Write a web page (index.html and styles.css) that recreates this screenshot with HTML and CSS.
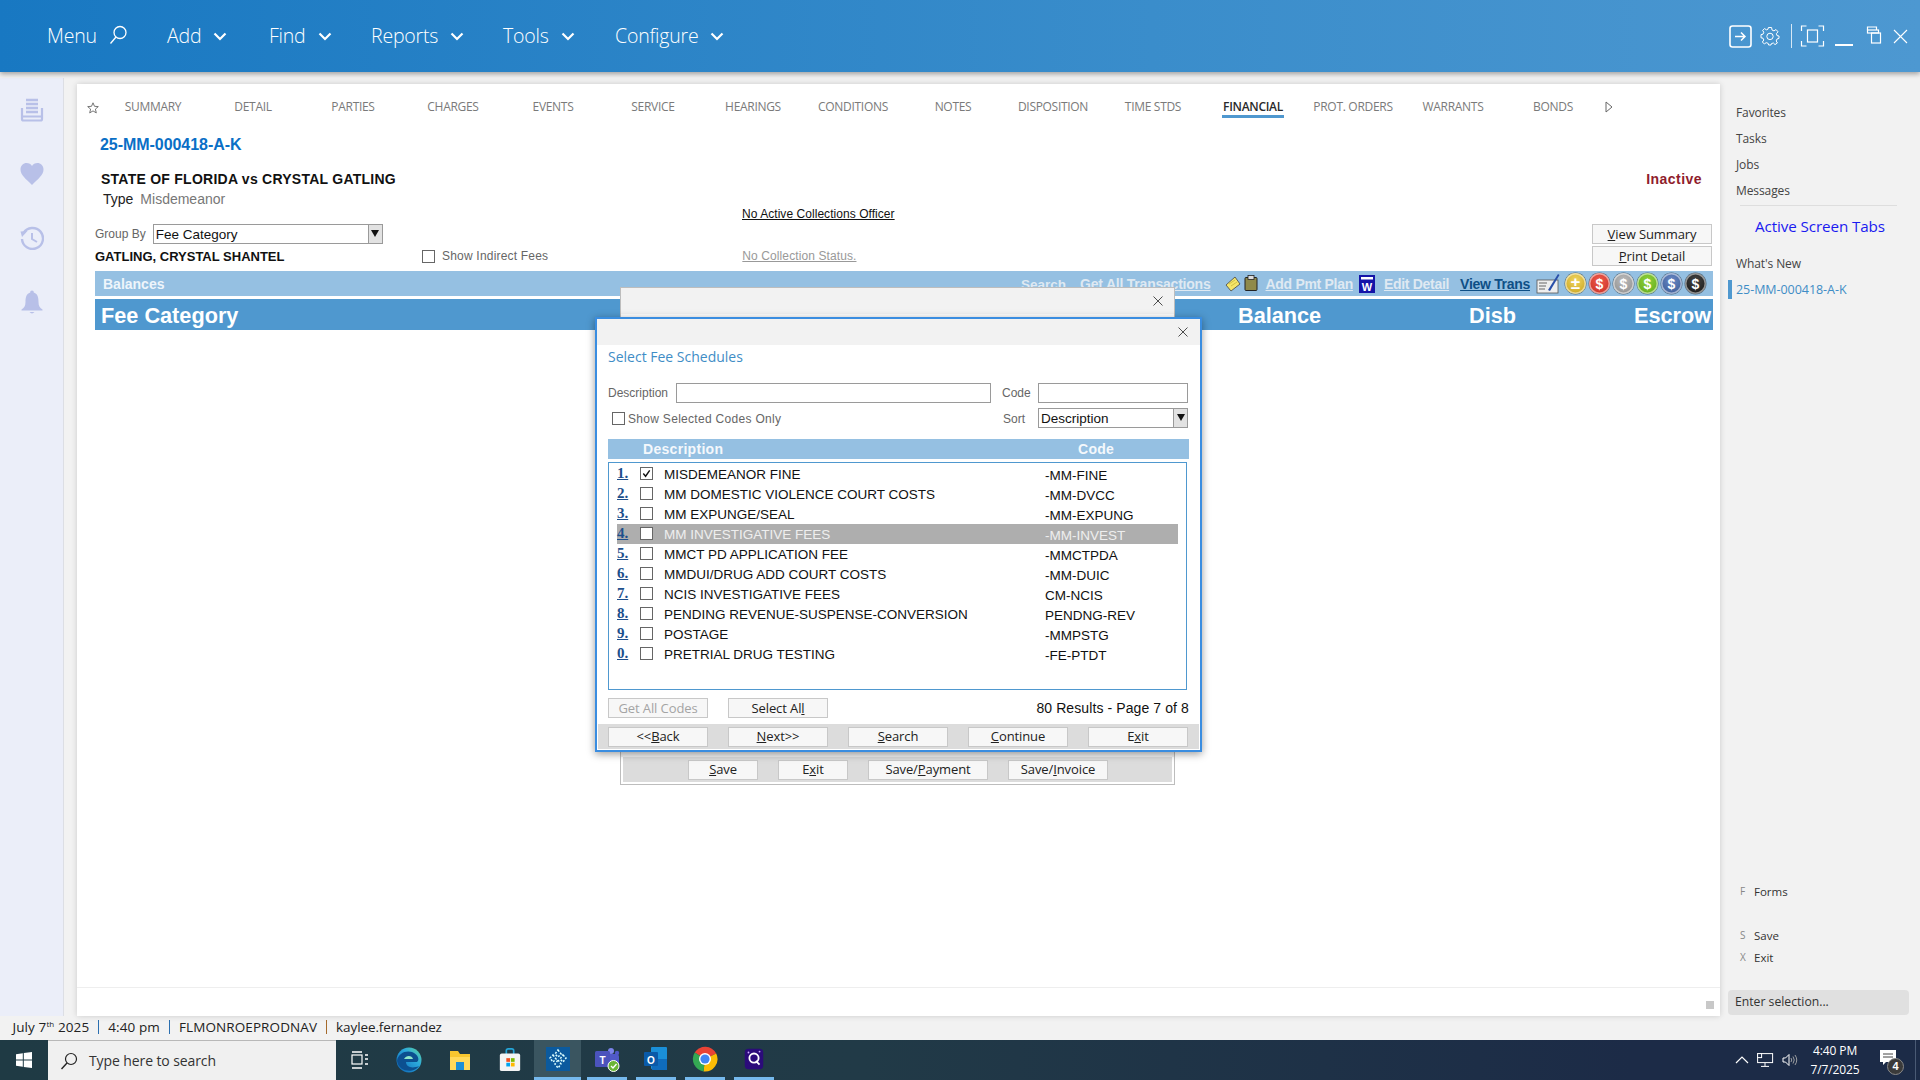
FILE: index.html
```html
<!DOCTYPE html>
<html lang="en">
<head>
<meta charset="utf-8">
<title>Financial</title>
<link rel="stylesheet" href="styles.css">
</head>
<body>
<div class="app">
  <header class="topbar">
    <nav class="nav">
      <div class="nav-item"><span>Menu</span><svg class="nav-search" viewBox="0 0 20 20"><circle cx="12" cy="7.500" r="6" fill="none" stroke="#fff" stroke-width="1.300"/><path d="M8 12 L2.500 18.500" stroke="#fff" stroke-width="1.300" fill="none"/></svg></div>
      <div class="nav-item"><span>Add</span><svg class="chev" viewBox="0 0 14 9"><path d="M1.500 1.500 L7 7 L12.500 1.500" fill="none" stroke="#fff" stroke-width="2.200"/></svg></div>
      <div class="nav-item"><span>Find</span><svg class="chev" viewBox="0 0 14 9"><path d="M1.500 1.500 L7 7 L12.500 1.500" fill="none" stroke="#fff" stroke-width="2.200"/></svg></div>
      <div class="nav-item"><span>Reports</span><svg class="chev" viewBox="0 0 14 9"><path d="M1.500 1.500 L7 7 L12.500 1.500" fill="none" stroke="#fff" stroke-width="2.200"/></svg></div>
      <div class="nav-item"><span>Tools</span><svg class="chev" viewBox="0 0 14 9"><path d="M1.500 1.500 L7 7 L12.500 1.500" fill="none" stroke="#fff" stroke-width="2.200"/></svg></div>
      <div class="nav-item"><span>Configure</span><svg class="chev" viewBox="0 0 14 9"><path d="M1.500 1.500 L7 7 L12.500 1.500" fill="none" stroke="#fff" stroke-width="2.200"/></svg></div>
    </nav>
    <div class="winctl">
      <svg class="ctl-login" viewBox="0 0 23 23"><rect x="1" y="1" width="21" height="21" rx="2.500" fill="none" stroke="#fff" stroke-width="1.600"/><path d="M6 11.500 H16 M12 7.500 L16 11.500 L12 15.500" fill="none" stroke="#fff" stroke-width="1.500"/></svg>
      <svg class="ctl-gear" viewBox="0 0 20 20"><path d="M8.400 1.500 H11.600 L12 4 L14 4.900 L16 3.500 L18 5.800 L16.400 7.700 L17 9.600 L19 10 V12.400 L17 13 L16.200 15 L17.400 17 L15 18.600 L13.400 17 L11.400 17.600 L11 19 H8.600 L8.200 17.400 L6.200 16.600 L4.400 18 L2.400 16 L3.800 14 L3 12.200 L1 11.800 V8.600 L3 8.200 L3.800 6.200 L2.600 4.400 L4.600 2.600 L6.400 3.800 L8 3.200 Z" fill="none" stroke="#fff" stroke-width="1"/><circle cx="10" cy="10.400" r="3.200" fill="none" stroke="#fff" stroke-width="1"/></svg>
      <span class="ctl-sep"></span>
      <svg class="ctl-full" viewBox="0 0 24 22"><path d="M1 6 V1 H6 M18 1 H23 V6 M23 16 V21 H18 M6 21 H1 V16" fill="none" stroke="#fff" stroke-width="1.200"/><rect x="7" y="5" width="10" height="12" fill="none" stroke="#fff" stroke-width="1.200"/></svg>
      <span class="ctl-min"></span>
      <svg class="ctl-restore" viewBox="0 0 16 18"><path d="M1 4 V1 H10 V4" fill="none" stroke="#fff" stroke-width="1.200"/><rect x="1" y="4" width="11" height="3" fill="none" stroke="#fff" stroke-width="1.200"/><rect x="5" y="7" width="9" height="10" fill="none" stroke="#fff" stroke-width="1.200"/></svg>
      <svg class="ctl-close" viewBox="0 0 15 15"><path d="M1 1 L14 14 M14 1 L1 14" stroke="#fff" stroke-width="1.100" fill="none"/></svg>
    </div>
  </header>

  <div class="main">
    <aside class="rail">
      <svg class="rail-icon" viewBox="0 0 24 24"><path d="M6 2 H18 M6 6 H18 M6 10 H18 M6 14 H18" stroke="#b8c0e8" stroke-width="2.400" fill="none"/><path d="M2 10 V21 Q2 22.500 3.500 22.500 H20.500 Q22 22.500 22 21 V10 M2 18.500 H22" stroke="#b8c0e8" stroke-width="2.200" fill="none"/></svg>
      <svg class="rail-icon" viewBox="0 0 24 24"><path d="M12 23 C6 17 0.500 13 0.500 7.500 C0.500 3.500 3.500 1 6.500 1 C9 1 11 2.300 12 4 C13 2.300 15 1 17.500 1 C20.500 1 23.500 3.500 23.500 7.500 C23.500 13 18 17 12 23 Z" fill="#b8c0e8"/></svg>
      <svg class="rail-icon" viewBox="0 0 24 24"><path d="M3.500 7 A10.500 10.500 0 1 1 2 13" fill="none" stroke="#b8c0e8" stroke-width="2.400"/><path d="M0.500 5.500 L7.500 5 L2 11 Z" fill="#b8c0e8"/><path d="M12 7 V13 L17 16" fill="none" stroke="#b8c0e8" stroke-width="2"/></svg>
      <svg class="rail-icon" viewBox="0 0 24 24"><path d="M12 0.500 a1.800 1.800 0 0 1 1.800 2 C18 4 18.500 8 18.500 12 C18.500 16 20 18 22.500 19.500 V20.500 H1.500 V19.500 C4 18 5.500 16 5.500 12 C5.500 8 6 4 10.200 2.500 a1.800 1.800 0 0 1 1.800 -2 Z" fill="#b8c0e8"/><path d="M9.500 22 H14.500 Q12 24.800 9.500 22 Z" fill="#b8c0e8"/></svg>
    </aside>

    <section class="panel">
      <div class="tabs">
        <svg class="tab-star" viewBox="0 0 12 12"><path d="M6 .8 L7.500 4.300 L11.300 4.600 L8.400 7.100 L9.300 10.900 L6 8.900 L2.700 10.900 L3.600 7.100 L.7 4.600 L4.500 4.300 Z" fill="none" stroke="#666" stroke-width=".9"/></svg>
        <div class="tab-list">
          <span class="tab">SUMMARY</span><span class="tab">DETAIL</span><span class="tab">PARTIES</span><span class="tab">CHARGES</span><span class="tab">EVENTS</span><span class="tab">SERVICE</span><span class="tab">HEARINGS</span><span class="tab">CONDITIONS</span><span class="tab">NOTES</span><span class="tab">DISPOSITION</span><span class="tab">TIME STDS</span><span class="tab tab-on"><b>FINANCIAL</b></span><span class="tab">PROT. ORDERS</span><span class="tab">WARRANTS</span><span class="tab">BONDS</span>
          <svg class="tab-more" viewBox="0 0 8 12"><path d="M1 1 L7 6 L1 11 Z" fill="none" stroke="#666" stroke-width="1"/></svg>
        </div>
      </div>
      <div class="case-no">25-MM-000418-A-K</div>
      <div class="party-row">
        <div class="party">STATE OF FLORIDA vs CRYSTAL GATLING</div>
        <div class="inactive">Inactive</div>
      </div>
      <div class="type-row"><span class="type-k">Type</span><span class="type-v">Misdemeanor</span></div>
      <div class="officer"><u>No Active Collections Officer</u></div>
      <div class="filter-grid">
        <div class="group-by"><span class="lbl">Group By</span><div class="select sel-group"><span>Fee Category</span><i class="sel-arrow"><b></b></i></div></div>
        <div></div>
        <button class="btn btn-wide" type="button"><u>V</u>iew Summary</button>
        <div class="defendant">GATLING, CRYSTAL SHANTEL</div>
        <div class="indirect-wrap">
          <label class="indirect"><span class="cb"></span><span class="lbl">Show Indirect Fees</span></label>
          <u class="nostatus">No Collection Status.</u>
        </div>
        <button class="btn btn-wide" type="button"><u>P</u>rint Detail</button>
      </div>
      <div class="balances">
        <span class="bal-title">Balances</span>
        <div class="bal-tools">
          <u class="t-dim t-search">Search</u>
          <u class="t-dim t-all">Get All Transactions</u>
          <svg class="ti-note" viewBox="0 0 16 16"><path d="M1 9 L10 1 L15 8 L6 15 Z" fill="#f5e66a" stroke="#444" stroke-width=".8"/><path d="M4 8 L10 4 M6 10 L12 6" stroke="#c9b83a" stroke-width=".8"/></svg>
          <svg class="ti-clip" viewBox="0 0 14 16"><rect x="1" y="2.500" width="12" height="13" rx="1" fill="#8f8a4a" stroke="#222" stroke-width="1"/><rect x="4" y=".5" width="6" height="4" fill="#ddd" stroke="#222" stroke-width=".8"/></svg>
          <u class="t-dim t-add">Add Pmt Plan</u>
          <svg class="ti-word" viewBox="0 0 16 18"><rect width="16" height="18" fill="#1414a8"/><rect x="2" y="2" width="12" height="2.500" fill="#fff"/><text x="8" y="15.500" class="ti-w">W</text></svg>
          <u class="t-dim t-edit">Edit Detail</u>
          <u class="t-view">View Trans</u>
          <svg class="ti-pen" viewBox="0 0 24 22"><rect x="1" y="7" width="21" height="13" fill="#eee" stroke="#555" stroke-width=".8"/><path d="M3 10 H11 M3 13 H10 M3 16 H9" stroke="#666" stroke-width="1"/><path d="M12 17 L22 1 L23.500 2 L14 18 Z" fill="#2a4fa8"/></svg>
          <div class="coins">
            <span class="coin c-gold">&#177;</span><span class="coin c-red">$</span><span class="coin c-gray">$</span><span class="coin c-green">$</span><span class="coin c-blue">$</span><span class="coin c-black">$</span>
          </div>
        </div>
      </div>
      <div class="fee-head">
        <span class="fh-cat">Fee Category</span>
        <span class="fh-bal">Balance</span>
        <span class="fh-disb">Disb</span>
        <span class="fh-esc">Escrow</span>
      </div>
      <div class="panel-fill"></div>
      <div class="panel-foot"><span class="foot-sq"></span></div>
    </section>

    <aside class="side">
      <a class="side-link">Favorites</a>
      <a class="side-link">Tasks</a>
      <a class="side-link">Jobs</a>
      <a class="side-link">Messages</a>
      <div class="side-rule"></div>
      <div class="side-active">Active Screen Tabs</div>
      <a class="side-link side-new">What's New</a>
      <a class="side-case">25-MM-000418-A-K</a>
      <div class="side-spacer"></div>
      <div class="key key-forms"><i>F</i><span>Forms</span></div>
      <div class="key key-save"><i>S</i><span>Save</span></div>
      <div class="key key-exit"><i>X</i><span>Exit</span></div>
      <div class="enter">Enter selection...</div>
    </aside>
  </div>

  <div class="statusline">
    <span>July 7<sup>th</sup> 2025</span><i class="st-sep st-a"></i><span>4:40 pm</span><i class="st-sep st-b"></i><span>FLMONROEPRODNAV</span><i class="st-sep st-c"></i><span class="st-user">kaylee.fernandez</span>
  </div>

  <footer class="taskbar">
    <div class="tb-start"><svg class="win" viewBox="0 0 16 16"><path d="M0 2.300 L6.800 1.300 V7.500 H0 Z M7.800 1.100 L16 0 V7.500 H7.800 Z M0 8.500 H6.800 V14.700 L0 13.700 Z M7.800 8.500 H16 V16 L7.800 14.900 Z" fill="#fff"/></svg></div>
    <div class="tb-search"><svg class="tb-glass" viewBox="0 0 18 18"><circle cx="11" cy="7" r="5.500" fill="none" stroke="#222" stroke-width="1.200"/><path d="M7 11 L1.500 17" stroke="#222" stroke-width="1.400"/></svg><span>Type here to search</span></div>
    <div class="tb-apps">
      <span class="tb-app"><svg viewBox="0 0 18 18" class="i18"><rect x="1" y="4" width="10" height="9" fill="none" stroke="#fff" stroke-width="1.200"/><path d="M1 1 H11 M1 17 H11 M14 4 H17 M14 8 H17 M14 13 H17" stroke="#fff" stroke-width="1.400"/></svg></span>
      <span class="tb-app tb-w50"><svg viewBox="0 0 26 26" class="i26"><defs><linearGradient id="ed" x1="0" y1="1" x2="1" y2="0"><stop offset="0" stop-color="#0b5fb0"/><stop offset=".6" stop-color="#2aa7dc"/><stop offset="1" stop-color="#5fd6a0"/></linearGradient></defs><circle cx="13" cy="13" r="12.500" fill="url(#ed)"/><path d="M1 14 C2 6 10 3 16 5 C22 7 24 13 21 15 H10 C10 20 16 22 23 19 C19 26 3 26 1 14 Z" fill="#0c4f90"/><path d="M8 12 C10 8 16 8 17 12 Z" fill="#8fe6c8"/></svg></span>
      <span class="tb-app tb-w50"><svg viewBox="0 0 24 24" class="i24"><path d="M2 3 H10 L12 6 H22 V22 H2 Z" fill="#f7c62f"/><rect x="2" y="9" width="20" height="13" fill="#ffd95a"/><rect x="8" y="14" width="8" height="8" fill="#1c8fd6"/></svg></span>
      <span class="tb-app"><svg viewBox="0 0 24 26" class="i24"><path d="M8 7 V3 Q8 1 10 1 H14 Q16 1 16 3 V7" fill="none" stroke="#25a5d8" stroke-width="1.800"/><rect x="1" y="6" width="22" height="19" rx="2" fill="#f4f4f4"/><rect x="8" y="11" width="4" height="4" fill="#f25022"/><rect x="13" y="11" width="4" height="4" fill="#7fba00"/><rect x="8" y="16" width="4" height="4" fill="#00a4ef"/><rect x="13" y="16" width="4" height="4" fill="#ffb900"/></svg></span>
      <span class="tb-app tb-active"><svg viewBox="0 0 24 24" class="i24"><rect width="24" height="24" fill="#0b5a9e"/><path d="M12 3 L15 7 L12 10 L9 7 Z M7 8 L10 12 L7 15 L4 11 Z M17 8 L20 11 L17 15 L14 12 Z M12 13 L15 17 L12 21 L9 17 Z" fill="none" stroke="#dff" stroke-width="1.500" stroke-dasharray="2 1.500"/></svg></span>
      <span class="tb-app"><svg viewBox="0 0 26 26" class="i26"><circle cx="17" cy="5" r="3" fill="#7b83eb"/><circle cx="23" cy="7" r="2.200" fill="#5059c9"/><rect x="13" y="8" width="12" height="12" rx="3" fill="#5059c9"/><rect x="1" y="5" width="15" height="16" rx="1.500" fill="#4b53bc"/><text x="8.500" y="17.500" class="ti-t">T</text><circle cx="19.500" cy="20" r="5.500" fill="#6bb536" stroke="#fff" stroke-width="1"/><path d="M17 20 L19 22 L22.500 18" stroke="#fff" stroke-width="1.300" fill="none"/></svg></span>
      <span class="tb-app"><svg viewBox="0 0 26 26" class="i26"><rect x="8" y="1" width="16" height="22" rx="1" fill="#1a8fd8"/><path d="M9 13 L24 13 V24 H9 Z" fill="#0f6cbd"/><rect x="1" y="6" width="14" height="14" rx="1" fill="#0a5aa8"/><text x="8" y="17.500" class="ti-t">O</text></svg></span>
      <span class="tb-app"><svg viewBox="0 0 26 26" class="i26"><path d="M13 13 L2.700 6.500 A12.500 12.500 0 0 1 24.200 7.500 Z" fill="#ea4335"/><path d="M13 13 L24.200 7.500 A12.500 12.500 0 0 1 11.500 25.400 Z" fill="#fbbc05"/><path d="M13 13 L11.500 25.400 A12.500 12.500 0 0 1 2.700 6.500 Z" fill="#34a853"/><circle cx="13" cy="13" r="6" fill="#fff"/><circle cx="13" cy="13" r="4.600" fill="#4285f4"/></svg></span>
      <span class="tb-app"><svg viewBox="0 0 24 26" class="i24"><rect x="2" y="2" width="20" height="22" rx="4" fill="#2b0b7a"/><circle cx="12" cy="12" r="5" fill="none" stroke="#fff" stroke-width="2"/><path d="M14 15 L18 19" stroke="#fff" stroke-width="2"/><circle cx="6" cy="6" r="1" fill="#c9a6ff"/><circle cx="18" cy="5" r="1" fill="#c9a6ff"/></svg></span>
    </div>
    <div class="tray">
      <svg class="tr-caret" viewBox="0 0 14 8"><path d="M1 7 L7 1 L13 7" fill="none" stroke="#fff" stroke-width="1.200"/></svg>
      <svg class="tr-net" viewBox="0 0 17 14"><rect x=".6" y=".6" width="15" height="9" fill="none" stroke="#fff" stroke-width="1"/><rect x=".6" y=".6" width="4" height="4" fill="#1c2b47" stroke="#fff" stroke-width="1"/><path d="M8 10 V13 M4 13.400 H12" stroke="#fff" stroke-width="1"/></svg>
      <svg class="tr-vol" viewBox="0 0 17 14"><path d="M1 5 H3.500 L7 1.500 V12.500 L3.500 9 H1 Z" fill="none" stroke="#fff" stroke-width="1"/><path d="M9 5 Q10.500 7 9 9 M11 3.500 Q13.500 7 11 10.500 M13 2 Q16.500 7 13 12" fill="none" stroke="#aaa" stroke-width=".9"/></svg>
      <div class="clock"><span>4:40 PM</span><span>7/7/2025</span></div>
      <div class="notif"><svg class="n-msg" viewBox="0 0 16 16"><path d="M0 0 H16 V12 H6 L3 15 V12 H0 Z" fill="#fff"/><path d="M3 4 H13 M3 7 H13" stroke="#444" stroke-width="1"/></svg><span class="n-badge">4</span></div>
      <span class="tr-edge"></span>
    </div>
  </footer>

  <div class="modal-back">
    <div class="mb-title"><svg class="x" viewBox="0 0 10 10"><path d="M.5 .5 L9.500 9.500 M9.500 .5 L.5 9.500" stroke="#222" stroke-width=".8"/></svg></div>
    <div class="mb-body"></div>
    <div class="mb-foot">
      <button class="btn b70" type="button"><u>S</u>ave</button>
      <button class="btn b70" type="button">E<u>x</u>it</button>
      <button class="btn b120" type="button">Save/<u>P</u>ayment</button>
      <button class="btn b100" type="button">Save/<u>I</u>nvoice</button>
    </div>
  </div>

  <div class="modal">
    <div class="m-title"><svg class="x" viewBox="0 0 10 10"><path d="M.5 .5 L9.500 9.500 M9.500 .5 L.5 9.500" stroke="#222" stroke-width=".8"/></svg></div>
    <div class="m-body">
      <h2 class="m-heading">Select Fee Schedules</h2>
      <div class="m-row1">
        <span class="lbl m-l-desc">Description</span><span class="input in-desc"></span>
        <span class="lbl m-l-code">Code</span><span class="input in-code"></span>
      </div>
      <div class="m-row2">
        <label class="m-only"><span class="cb"></span><span class="lbl spaced">Show Selected Codes Only</span></label>
        <span class="lbl m-l-sort">Sort</span>
        <div class="select sel-sort"><span>Description</span><i class="sel-arrow"><b></b></i></div>
      </div>
      <div class="m-head"><span class="mh-d">Description</span><span class="mh-c">Code</span></div>
      <div class="m-list">
        <div class="row"><u class="n">1.</u><span class="cb cb-on"><svg viewBox="0 0 12 12"><path d="M2.500 6 L5 9 L9.500 2.500" fill="none" stroke="#111" stroke-width="1.500"/></svg></span><span class="d">MISDEMEANOR FINE</span><span class="c">-MM-FINE</span></div>
        <div class="row"><u class="n">2.</u><span class="cb"></span><span class="d">MM DOMESTIC VIOLENCE COURT COSTS</span><span class="c">-MM-DVCC</span></div>
        <div class="row"><u class="n">3.</u><span class="cb"></span><span class="d">MM EXPUNGE/SEAL</span><span class="c">-MM-EXPUNG</span></div>
        <div class="row row-on"><u class="n">4.</u><span class="cb"></span><span class="d">MM INVESTIGATIVE FEES</span><span class="c">-MM-INVEST</span></div>
        <div class="row"><u class="n">5.</u><span class="cb"></span><span class="d">MMCT PD APPLICATION FEE</span><span class="c">-MMCTPDA</span></div>
        <div class="row"><u class="n">6.</u><span class="cb"></span><span class="d">MMDUI/DRUG ADD COURT COSTS</span><span class="c">-MM-DUIC</span></div>
        <div class="row"><u class="n">7.</u><span class="cb"></span><span class="d">NCIS INVESTIGATIVE FEES</span><span class="c">CM-NCIS</span></div>
        <div class="row"><u class="n">8.</u><span class="cb"></span><span class="d">PENDING REVENUE-SUSPENSE-CONVERSION</span><span class="c">PENDNG-REV</span></div>
        <div class="row"><u class="n">9.</u><span class="cb"></span><span class="d">POSTAGE</span><span class="c">-MMPSTG</span></div>
        <div class="row"><u class="n">0.</u><span class="cb"></span><span class="d">PRETRIAL DRUG TESTING</span><span class="c">-FE-PTDT</span></div>
      </div>
      <div class="m-results">
        <button class="btn b100 btn-off" type="button">Get All Codes</button>
        <button class="btn b100" type="button">Select Al<u>l</u></button>
        <span class="count">80 Results - Page 7 of 8</span>
      </div>
    </div>
    <div class="m-foot">
      <button class="btn b100" type="button">&lt;&lt;<u>B</u>ack</button>
      <button class="btn b100" type="button"><u>N</u>ext&gt;&gt;</button>
      <button class="btn b100" type="button"><u>S</u>earch</button>
      <button class="btn b100" type="button"><u>C</u>ontinue</button>
      <button class="btn b100" type="button">E<u>x</u>it</button>
    </div>
  </div>
</div>
</body>
</html>
```

FILE: styles.css
```css
* { box-sizing: border-box; }
html, body { margin: 0; padding: 0; width: 1920px; height: 1080px; overflow: hidden; }
body { font-family: "Open Sans", "Liberation Sans", sans-serif; background: #f2f2f2; color: #222; }
svg { display: block; flex: none; }
.app { position: relative; width: 1920px; height: 1080px; display: grid; grid-template-rows: 72px 944px 24px 40px; }

/* top bar */
.topbar { display: flex; align-items: center; justify-content: space-between; background: linear-gradient(90deg, #1878c2 0%, #3a8dcb 60%, #4d98d1 100%); box-shadow: 0 2px 5px rgba(0,0,0,.35); position: relative; z-index: 2; }
.nav { display: grid; grid-template-columns: 120px 102px 102px 132px 112px 130px; margin-left: 47px; }
.nav-item { display: flex; align-items: center; gap: 12px; color: #fff; font-size: 19.500px; font-weight: 300; letter-spacing: -.2px; height: 72px; padding-bottom: 2px; }
.nav-search { width: 20px; height: 20px; margin-left: -1px; }
.chev { width: 14px; height: 9px; margin-top: 3px; }
.winctl { display: flex; align-items: center; height: 72px; position: relative; padding-right: 12px; }
.ctl-login { width: 23px; height: 23px; margin-right: 8px; }
.ctl-gear { width: 20px; height: 20px; }
.ctl-sep { width: 1px; height: 24px; background: #d6e8f5; margin: 0 8px 0 11px; }
.ctl-full { width: 25px; height: 22px; }
.ctl-min { width: 18px; height: 2px; background: #fff; margin: 18px 13px 0 10px; }
.ctl-restore { width: 17px; height: 18px; margin-top: -3px; margin-right: 10px; }
.ctl-close { width: 15px; height: 15px; }

/* main region */
.main { display: flex; min-height: 0; }
.rail { width: 64px; flex: none; background: #ebeef9; border-right: 1px solid #dcdee4; display: flex; flex-direction: column; align-items: center; gap: 40px; padding-top: 20px; margin-top: 6px; }
.rail-icon { width: 24px; height: 24px; }
.panel { width: 1643px; margin: 12px 0 0 13px; background: #fff; box-shadow: 0 0 6px rgba(0,0,0,.16); display: flex; flex-direction: column; min-height: 0; padding: 0 7px 0 18px; position: relative; }
.tabs { display: flex; align-items: flex-start; height: 47px; padding-top: 14px; margin-left: -8px; }
.tab-star { width: 12px; height: 12px; margin-top: 4px; }
.tab-list { display: flex; margin-left: 4px; align-items: flex-start; }
.tab { width: 100px; flex: none; text-align: center; font-size: 12px; color: #7a7a7a; letter-spacing: -.3px; line-height: 18px; }
.tab-on b { display: inline-block; font-weight: 600; color: #2a2a2a; border-bottom: 3px solid #4f98cf; line-height: 17px; padding: 0 1px; }
.tab-more { width: 8px; height: 12px; margin: 3px 0 0 2px; }
.case-no { font: bold 16px "Liberation Sans", sans-serif; color: #0a6fc6; margin-left: 5px; line-height: 20px; padding-top: 4px; height: 38px; letter-spacing: -.05px; }
.party-row { display: flex; justify-content: space-between; height: 19px; align-items: center; margin-left: 6px; padding-right: 11px; }
.party { font: bold 14px "Liberation Sans", sans-serif; color: #111; letter-spacing: .25px; }
.inactive { font: bold 14px "Liberation Sans", sans-serif; color: #8f1d2c; letter-spacing: .45px; }
.type-row { display: flex; gap: 7px; margin-left: 8px; margin-top: 1px; height: 19px; align-items: center; font-family: "Liberation Sans", sans-serif; }
.type-k { font-size: 14px; color: #222; }
.type-v { font-size: 14px; color: #777; }
.officer { font: 12px "Liberation Sans", sans-serif; color: #111; height: 20px; line-height: 20px; margin-left: 647px; margin-top: -4px; letter-spacing: .05px; }
.filter-grid { display: grid; grid-template-columns: 327px 1fr 120px; grid-template-rows: 20px 20px; row-gap: 2px; margin-top: 0; padding-right: 1px; }
.group-by { display: flex; align-items: center; gap: 7px; grid-column: 1; }
.lbl { font: 12px "Liberation Sans", sans-serif; color: #666; }
.select { position: relative; display: flex; align-items: center; height: 20px; border: 1px solid #9a9a9a; font: 13.500px "Liberation Sans", sans-serif; color: #111; background: #fff; padding-left: 2px; }
.sel-group { width: 230px; }
.sel-arrow { position: absolute; right: 0; top: 0; bottom: 0; width: 14px; background: #e2e2e2; border-left: 1px solid #9a9a9a; display: flex; justify-content: center; padding-top: 5px; }
.sel-arrow b { width: 0; height: 0; border: 4px solid transparent; border-top: 7px solid #111; border-bottom: 0; }
.defendant { font: bold 13px "Liberation Sans", sans-serif; color: #111; display: flex; align-items: center; }
.indirect-wrap { display: flex; align-items: center; grid-column: 2; }
.indirect { display: flex; align-items: center; gap: 7px; margin-left: 0; }
.indirect .lbl { letter-spacing: .2px; }
.nostatus { font: 12px "Liberation Sans", sans-serif; color: #999; margin-left: 194px; letter-spacing: .1px; }
.cb { width: 13px; height: 13px; border: 1px solid #666; background: #fff; flex: none; display: block; }
.cb svg { width: 11px; height: 11px; }
.btn { font: 13px "Open Sans", "Liberation Sans", sans-serif; color: #222; background: #f7f7f7; border: 1.500px solid #c8c8c8; height: 20px; padding: 0; line-height: 17px; letter-spacing: -.1px; }
.btn-wide { width: 120px; justify-self: end; }
.b70 { width: 70px; }
.b100 { width: 100px; }
.b120 { width: 120px; }
.btn-off { color: #a4a4a4; }
.balances { height: 25px; margin-top: 5px; background: #95c0e2; display: flex; align-items: center; justify-content: space-between; font-family: "Liberation Sans", sans-serif; padding: 0 7px 0 8px; }
.bal-title { font-size: 14px; font-weight: bold; color: #eef5fb; }
.bal-tools { display: flex; align-items: center; padding-top: 1px; }
.bal-tools u { font-size: 14px; font-weight: bold; letter-spacing: -.3px; white-space: nowrap; }
.t-dim { color: #dfe9f2; }
.t-search { font-size: 13.500px !important; margin-right: 14px; letter-spacing: 0 !important; }
.t-all { margin-right: 14px; letter-spacing: -.22px !important; }
.ti-note { width: 16px; height: 16px; margin-right: 3px; }
.ti-clip { width: 14px; height: 16px; margin: -2px 8px 0 0; }
.t-add { margin-right: 6px; }
.ti-word { width: 16px; height: 18px; margin-right: 9px; }
.ti-w { font: bold 11px "Liberation Sans", sans-serif; fill: #fff; text-anchor: middle; }
.ti-t { font: bold 10px "Liberation Sans", sans-serif; fill: #fff; text-anchor: middle; }
.t-edit { margin-right: 11px; }
.t-view { color: #0e4f86; margin-right: 6px; }
.ti-pen { width: 24px; height: 22px; margin-right: 5px; }
.coins { display: flex; gap: 3px; margin-top: -1px; }
.coin { width: 21px; height: 21px; border-radius: 50%; display: flex; align-items: center; justify-content: center; font: bold 14px "Liberation Sans", sans-serif; color: #fff; box-shadow: inset 0 0 0 1.500px rgba(255,255,255,.5), 0 0 0 .5px rgba(0,0,0,.45); }
.c-gold { background: radial-gradient(circle at 50% 35%, #f0d560, #c39d18); font-size: 17px; }
.c-red { background: radial-gradient(circle at 50% 35%, #ee5a4c, #c42a20); }
.c-gray { background: radial-gradient(circle at 50% 35%, #bbb, #888); }
.c-green { background: radial-gradient(circle at 50% 35%, #8ed13a, #5da518); }
.c-blue { background: radial-gradient(circle at 50% 35%, #6a88c4, #34558f); }
.c-black { background: radial-gradient(circle at 50% 35%, #444, #111); }
.fee-head { height: 31px; margin-top: 3px; background: #4f98cf; position: relative; display: grid; grid-template-columns: 1137px 231px 165px 1fr; align-items: center; font: bold 21.700px "Liberation Sans", sans-serif; color: #fff; padding: 2px 4px 0 6px; }
.fh-esc { text-align: right; }
.panel-fill { flex: 1; }
.panel-foot { height: 29px; margin: 0 -7px 0 -18px; border-top: 1px solid #eee; display: flex; justify-content: flex-end; padding: 13px 6px 0 0; }
.foot-sq { width: 8px; height: 8px; background: #c8c8c8; }

/* right side */
.side { flex: 1; display: flex; flex-direction: column; padding: 28px 11px 1px 8px; font-size: 12px; color: #444; }
.side-link { height: 26px; line-height: 26px; margin-left: 8px; letter-spacing: -.1px; }
.side-rule { height: 1px; background: #dedede; margin: 1px 12px 0 12px; }
.side-active { color: #1a1af0; font-size: 15.200px; text-align: center; margin-top: 9px; line-height: 22px; letter-spacing: -.1px; padding-left: 3px; }
.side-new { margin-top: 14px; }
.side-case { height: 19px; line-height: 19px; color: #3f8dc6; border-left: 4px solid #4f98cf; padding-left: 4px; margin-top: 3px; font-size: 12.500px; letter-spacing: -.05px; }
.side-spacer { flex: 1; }
.key { display: flex; align-items: center; height: 22px; }
.key i { width: 26px; padding-left: 12px; font-style: normal; font-size: 10px; color: #888; }
.key span { font-size: 11.500px; color: #333; }
.key-forms { margin-bottom: 22px; }
.key-exit { margin-bottom: 22px; }
.enter { height: 25px; background: #e0e0e0; border-radius: 4px; padding-left: 7px; line-height: 24px; font-size: 12.200px; color: #333; }

/* status line */
.statusline { display: flex; align-items: center; padding: 0 0 2px 12.500px; font-size: 13.500px; color: #222; letter-spacing: .1px; }
.statusline sup { font-size: 8px; line-height: 0; }
.st-sep { width: 1px; height: 14px; margin: 0 9px; }
.st-user { letter-spacing: -.1px; }
.st-a { background: #2b6fb0; }
.st-b { background: #2b6fb0; }
.st-c { background: #a56a2b; }

/* taskbar */
.taskbar { display: flex; align-items: stretch; background: linear-gradient(90deg, #1f3a44 0%, #213a47 45%, #1c2b47 85%); color: #fff; }
.tb-start { width: 48px; display: flex; align-items: center; justify-content: center; }
.win { width: 16px; height: 16px; }
.tb-search { width: 288px; background: #f0f0f0; border-top: 1px solid #b8b8b8; display: flex; align-items: center; color: #333; font-size: 14px; gap: 11px; padding-left: 12px; letter-spacing: -.1px; }
.tb-glass { width: 18px; height: 18px; }
.tb-apps { display: flex; margin-left: -1px; }
.tb-app { width: 49px; display: flex; align-items: center; justify-content: center; position: relative; }
.tb-app.tb-w50 { width: 50px; }
.tb-app:nth-child(3) svg { margin-left: 2px; }
.tb-app:nth-child(4) svg { margin-left: 2px; }
.tb-app.tb-active { background: #3a5560; width: 47px; margin: 0 6px 0 1px; border-bottom: 3px solid #76b9ed; }
.tb-active ~ .tb-app { border-bottom: 3px solid #76b9ed; margin-right: 9px; width: 40px; }
.i18 { width: 18px; height: 18px; }
.i24 { width: 24px; height: 24px; }
.i26 { width: 26px; height: 26px; }
.tray { margin-left: auto; display: flex; align-items: center; }
.tr-caret { width: 14px; height: 8px; margin-right: 8px; }
.tr-net { width: 17px; height: 14px; margin-right: 8px; }
.tr-vol { width: 17px; height: 14px; margin-right: 7px; }
.clock { display: flex; flex-direction: column; align-items: center; width: 58px; font-size: 12px; line-height: 19px; letter-spacing: -.1px; margin-right: 10px; }
.notif { position: relative; width: 30px; height: 30px; }
.n-msg { width: 16px; height: 16px; position: absolute; left: 6px; top: 5px; }
.n-badge { position: absolute; left: 13px; top: 13px; width: 17px; height: 17px; border-radius: 50%; background: #3a3a3a; border: 1px solid #888; color: #fff; font: bold 11px/15px "Liberation Sans", sans-serif; text-align: center; }
.tr-edge { width: 1px; height: 40px; background: #4a5a74; margin-left: 11px; margin-right: 4px; }

/* back dialog */
.modal-back { position: absolute; left: 620px; top: 287px; width: 555px; height: 498px; background: #fff; border: 1px solid #bdbdbd; display: flex; flex-direction: column; z-index: 4; }
.mb-title { height: 26px; background: #f2f2f2; display: flex; justify-content: flex-end; align-items: center; padding-right: 11px; flex: none; margin-bottom: 4px; }
.x { width: 10px; height: 10px; }
.mb-body { flex: 1; background: #f2f2f2; }
.mb-foot { height: 25px; margin: 0 2px 2px; background: #dcdcdc; display: flex; align-items: center; gap: 20px; padding-left: 65px; }

/* front dialog */
.modal { position: absolute; left: 595px; top: 317px; width: 607px; height: 435px; background: #fff; border: 2px solid #3a8de0; box-shadow: 0 2px 8px rgba(0,0,0,.4); display: flex; flex-direction: column; z-index: 5; }
.m-title { height: 26px; background: #f2f2f2; display: flex; justify-content: flex-end; align-items: center; padding-right: 12px; flex: none; }
.m-body { flex: 1; padding: 0 11px; font-family: "Liberation Sans", sans-serif; }
.m-heading { margin: 0; font: 400 14px/24px "Open Sans", sans-serif; color: #3f8dc6; height: 38px; }
.m-row1 { display: flex; align-items: center; height: 20px; }
.input { height: 20px; border: 1px solid #9a9a9a; background: #fff; display: block; }
.m-l-desc { width: 68px; }
.in-desc { width: 315px; }
.m-l-code { width: 36px; margin-left: 11px; }
.in-code { width: 150px; }
.m-row2 { display: flex; align-items: center; height: 20px; margin-top: 5px; }
.m-only { display: flex; align-items: center; gap: 3px; margin-left: 4px; width: 391px; }
.spaced { letter-spacing: .3px; padding-top: 1px; }
.m-l-sort { width: 35px; padding-top: 1px; }
.sel-sort { width: 150px; }
.m-head { height: 20px; margin-top: 11px; background: #95c0e2; color: #f4f8fc; font: bold 14px/21px "Liberation Sans", sans-serif; letter-spacing: .3px; display: flex; }
.mh-d { width: 470px; padding-left: 35px; }
.m-list { height: 228px; width: 579px; margin-top: 3px; border: 1px solid #4f98cf; padding: 1px 8px 0; }
.row { display: flex; align-items: center; height: 20px; font-size: 13.500px; color: #111; }
.n { width: 23px; flex: none; font: bold 15px "Liberation Serif", serif; color: #1d4f8c; margin-top: -2px; }
.row .cb { margin: -2px 11px 0 0; }
.row .d { width: 381px; flex: none; }
.row .c { padding-top: 2px; }
.row-on { background: #aeaeae; color: #eee; }
.m-results { display: flex; align-items: center; gap: 20px; margin-top: 8px; }
.count { margin-left: auto; margin-right: 0; font-size: 14px; color: #111; letter-spacing: .1px; }
.m-foot { height: 25px; margin: 0 1px 1px; background: #dcdcdc; display: flex; align-items: center; gap: 20px; padding-left: 10px; flex: none; }
```
